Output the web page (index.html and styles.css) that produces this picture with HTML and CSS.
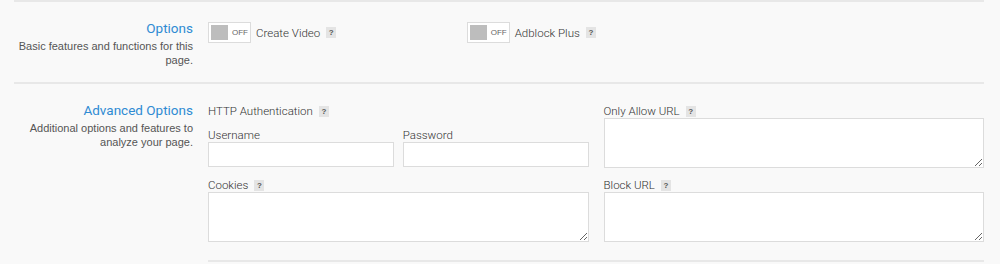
FILE: index.html
```html
<!DOCTYPE html>
<html lang="en">
<head>
  <meta charset="UTF-8" />
  <title>Test Settings</title>
  <link rel="stylesheet" href="styles.css">
</head>
<body>
  <div class="page">

    <!-- Basic options -->
    <section class="group">
      <div class="group-head">
        <h2 class="group-title">Options</h2>
        <p class="group-desc">Basic features and functions for this page.</p>
      </div>
      <div class="group-body toggles">
        <div class="toggle-item">
          <span class="toggle"><span class="knob"></span><span class="toggle-text">OFF</span></span>
          <span class="toggle-label">Create Video</span>
          <span class="help">?</span>
        </div>
        <div class="toggle-item">
          <span class="toggle"><span class="knob"></span><span class="toggle-text">OFF</span></span>
          <span class="toggle-label">Adblock Plus</span>
          <span class="help">?</span>
        </div>
      </div>
    </section>

    <!-- Advanced options -->
    <section class="group">
      <div class="group-head">
        <h2 class="group-title">Advanced Options</h2>
        <p class="group-desc">Additional options and features to analyze your page.</p>
      </div>
      <div class="group-body fields">
        <div class="col">
          <div class="label-row">HTTP Authentication <span class="help">?</span></div>
          <div class="pair">
            <label class="sub">Username<input type="text" class="text-input"></label>
            <label class="sub">Password<input type="password" class="text-input"></label>
          </div>
          <div class="label-row gap-top">Cookies <span class="help">?</span></div>
          <textarea class="text-area"></textarea>
        </div>
        <div class="col">
          <div class="label-row">Only Allow URL <span class="help">?</span></div>
          <textarea class="text-area"></textarea>
          <div class="label-row gap-top-sm">Block URL <span class="help">?</span></div>
          <textarea class="text-area"></textarea>
        </div>
      </div>
    </section>

  </div>
</body>
</html>
```

FILE: styles.css
```css
* { box-sizing: border-box; }

body {
  margin: 0;
  background: #f9f9f9;
  font-family: "Liberation Sans", Arial, sans-serif;
  color: #444;
}

.page {
  padding: 0 16px 0 14px;
}

.group {
  display: flex;
  gap: 15px;
  border-top: 2px solid #e8e8e8;
}

.group-head {
  width: 179px;
  flex-shrink: 0;
  text-align: right;
  padding: 18px 0 15px;
}

.group-title {
  margin: 0;
  font-family: Roboto, "Liberation Sans", sans-serif;
  font-size: 13.5px;
  line-height: 16px;
  font-weight: 400;
  color: #2f8bd3;
}

.group-desc {
  margin: 3px 0 0;
  font-size: 11px;
  line-height: 14px;
  color: #555;
}

.group-body {
  flex: 1;
}

/* toggles */
.toggles {
  display: grid;
  grid-template-columns: repeat(3, 1fr);
  align-items: start;
  padding-top: 20px;
}

.toggle-item {
  display: flex;
  align-items: center;
  height: 21px;
}

.toggle {
  display: inline-flex;
  align-items: center;
  width: 43px;
  height: 21px;
  padding: 0 2px;
  background: #fff;
  border: 1px solid #dcdcdc;
}

.knob {
  width: 18px;
  height: 15px;
  background: #bdbdbd;
}

.toggle-text {
  margin-left: 4px;
  font-size: 8px;
  color: #666;
}

.toggle-label,
.label-row,
.sub {
  font-family: Roboto, "Liberation Sans", sans-serif;
  font-weight: 300;
  font-size: 11.5px;
  color: #333;
}

.toggle-label {
  margin-left: 5px;
}

.help {
  display: inline-block;
  width: 10px;
  height: 11px;
  margin-left: 6px;
  background: #e4e4e4;
  color: #555;
  font-family: "Liberation Sans", Arial, sans-serif;
  font-size: 8px;
  font-weight: bold;
  line-height: 11px;
  text-align: center;
}

/* fields */
.fields {
  display: grid;
  grid-template-columns: 1fr 1fr;
  gap: 15px;
  padding: 20px 0 18px;
  border-bottom: 2px solid #e8e8e8;
}

.label-row {
  display: flex;
  align-items: center;
  line-height: 14px;
}

.gap-top { margin-top: 11px; }
.gap-top-sm { margin-top: 10px; }

.pair {
  display: grid;
  grid-template-columns: 1fr 1fr;
  gap: 9px;
  margin-top: 10px;
}

.sub {
  display: block;
  line-height: 14px;
}

.text-input,
.text-area {
  display: block;
  width: 100%;
  margin: 0;
  background: #fff;
  border: 1px solid #dcdcdc;
  border-radius: 0;
  font-family: inherit;
  font-size: 12px;
  outline: none;
}

.text-input {
  height: 25px;
  padding: 0 4px;
}

.text-area {
  height: 50px;
  padding: 4px;
}
```
